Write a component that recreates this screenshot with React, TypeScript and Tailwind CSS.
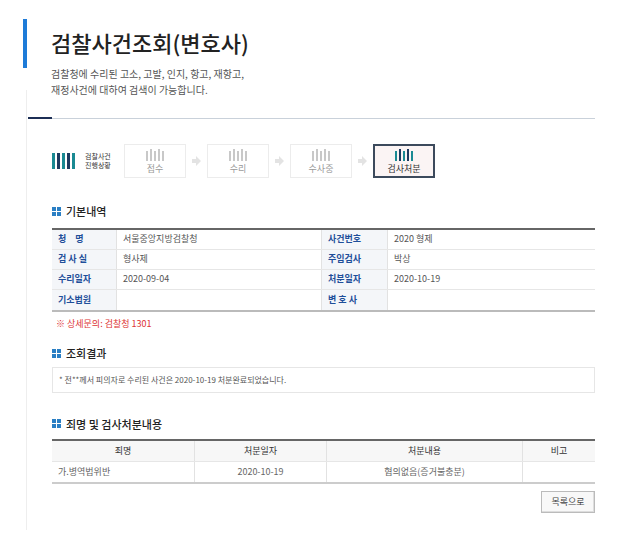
import React from "react";

const F = { fontFamily: '"Noto Sans CJK KR", "Noto Sans", sans-serif' };

function Bars({ active }: { active?: boolean }) {
  const h = [10, 12, 10, 12, 10];
  return (
    <div className="flex items-end gap-[2px] h-[12px]">
      {h.map((v, i) => (
        <div key={i} className="w-[2px]" style={{ height: v, background: active ? (i % 2 ? "#1e3a5f" : "#1a8a93") : "#c8c8c8" }} />
      ))}
    </div>
  );
}

function Step({ label, active }: { label: string; active?: boolean }) {
  return (
    <div className={`w-[62px] h-[34px] flex flex-col items-center justify-center gap-[3px] ${active ? "border-2 border-[#3c4a5c] bg-[#fbf4f4]" : "border border-[#ececec] bg-white"}`}>
      <Bars active={active} />
      <div className={`text-[9px] leading-none ${active ? "text-[#333]" : "text-[#999]"}`}>{label}</div>
    </div>
  );
}

function Arrow() {
  return (
    <svg width="21" height="10" viewBox="0 0 21 10"><path d="M6 3h4V0l5 5-5 5V7H6z" fill="#e3e3e3" /></svg>
  );
}

function Heading({ t }: { t: string }) {
  return (
    <div className="flex items-center gap-[5px] text-[11px] text-[#222] font-medium">
      <div className="grid grid-cols-2 gap-[1px]">
        {[0, 1, 2, 3].map((i) => <div key={i} className="w-[4px] h-[4px] bg-[#2a7fc4]" />)}
      </div>
      {t}
    </div>
  );
}

const L = "bg-[#f4f6f9] text-[#1f4f9a] font-bold px-[6px] border-r border-[#e2e2e2]";
const V = "px-[6px] text-[#555]";

export default function App() {
  const rows = [
    ["청　명", "서울중앙지방검찰청", "사건번호", "2020 형제"],
    ["검 사 실", "형사제", "주임검사", "박상"],
    ["수리일자", "2020-09-04", "처분일자", "2020-10-19"],
    ["기소법원", "", "변 호 사", ""],
  ];
  return (
    <div style={F} className="w-[629px] h-[543px] bg-white relative overflow-hidden">
      <div className="absolute left-[23px] top-[19px] w-[4px] h-[49px] bg-[#1e7bd8]" />
      <div className="absolute left-[26px] top-[90px] w-px h-[440px] bg-[#eeeeee]" />
      <div className="pl-[51px] pt-[26px]">
        <div className="text-[22px] leading-[32px] font-medium text-[#222]">검찰사건조회(변호사)</div>
        <div className="mt-[8px] text-[10px] leading-[16px] text-[#555]">
          검찰청에 수리된 고소, 고발, 인지, 항고, 재항고,<br />재정사건에 대하여 검색이 가능합니다.
        </div>
      </div>
      <div className="ml-[28px] w-[567px] mt-[19px] flex h-[2px]">
        <div className="w-[24px] bg-[#1c2e55]" />
        <div className="flex-1 bg-[#c9d1da] h-[1px] mt-[1px]" />
      </div>
      <div className="ml-[52px] mt-[25px] flex items-center">
        <div className="flex items-center gap-[10px] w-[72px]">
          <div className="flex items-end gap-[2px]">
            {[0, 1, 2, 3, 4].map((i) => <div key={i} className="w-[3px] h-[16px]" style={{ background: i % 2 ? "#1e3a5f" : "#1a8a93" }} />)}
          </div>
          <div className="text-[7px] leading-[9px] text-[#333]">검찰사건<br />진행상황</div>
        </div>
        <Step label="접수" /><Arrow /><Step label="수리" /><Arrow /><Step label="수사중" /><Arrow /><Step label="검사처분" active />
      </div>
      <div className="ml-[52px] w-[543px]">
        <div className="mt-[25px]"><Heading t="기본내역" /></div>
        <div className="mt-[8px] border-t-2 border-[#666] border-b-2 border-b-[#bbb]">
          {rows.map((r, i) => (
            <div key={i} className={`grid grid-cols-[65px_205px_66px_1fr] h-[20px] items-stretch text-[9px] ${i < 3 ? "border-b border-[#e6e6e6]" : ""}`}>
              <div className={`${L} flex items-center`}>{r[0]}</div>
              <div className={`${V} flex items-center border-r border-[#e2e2e2]`}>{r[1]}</div>
              <div className={`${L} flex items-center`}>{r[2]}</div>
              <div className={`${V} flex items-center`}>{r[3]}</div>
            </div>
          ))}
        </div>
        <div className="mt-[5px] ml-[4px] text-[9px] text-[#d33]">※ 상세문의: 검찰청 1301</div>
        <div className="mt-[15px]"><Heading t="조회결과" /></div>
        <div className="mt-[5px] h-[26px] border border-[#e6e6e6] flex items-center px-[6px] text-[8px] text-[#555]">
          * 전**께서 피의자로 수리된 사건은 2020-10-19 처분완료되었습니다.
        </div>
        <div className="mt-[23px]"><Heading t="죄명 및 검사처분내용" /></div>
        <div className="mt-[7px] border-t-2 border-[#666] border-b-2 border-b-[#ccc] text-[9px]">
          <div className="grid grid-cols-[143px_132px_196px_1fr] h-[21px] bg-[#f7f7f7] text-[#333] border-b border-[#e6e6e6]">
            {["죄명", "처분일자", "처분내용", "비고"].map((t, i) => (
              <div key={i} className={`flex items-center justify-center ${i < 3 ? "border-r border-[#e2e2e2]" : ""}`}>{t}</div>
            ))}
          </div>
          <div className="grid grid-cols-[143px_132px_196px_1fr] h-[20px] text-[#666]">
            <div className="flex items-center px-[6px] border-r border-[#e2e2e2]">가.병역법위반</div>
            <div className="flex items-center justify-center border-r border-[#e2e2e2]">2020-10-19</div>
            <div className="flex items-center justify-center border-r border-[#e2e2e2]">혐의없음(증거불충분)</div>
            <div />
          </div>
        </div>
        <div className="flex justify-end mt-[7px]">
          <div className="w-[54px] h-[22px] border border-[#bbb] bg-[#f8f8f8] shadow-[inset_-1px_-1px_0_#ddd] flex items-center justify-center text-[9px] text-[#444]">목록으로</div>
        </div>
      </div>
    </div>
  );
}
